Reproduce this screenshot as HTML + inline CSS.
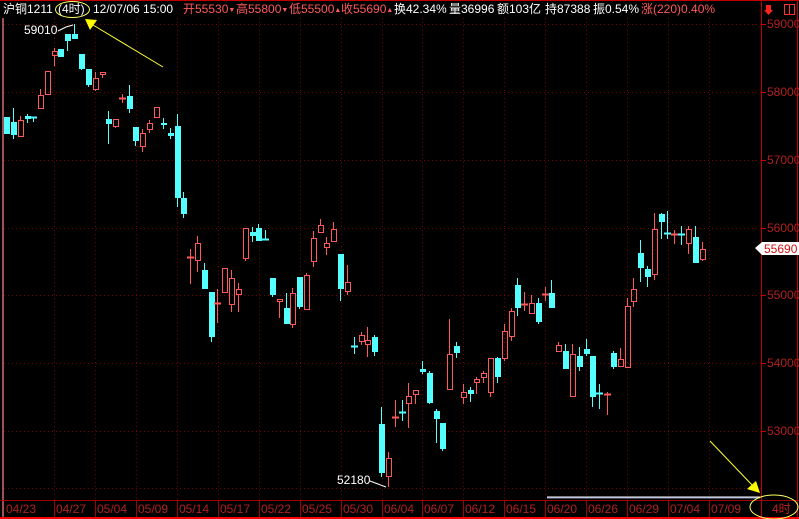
<!DOCTYPE html>
<html><head><meta charset="utf-8"><style>
html,body{margin:0;padding:0;background:#000;}
#w{position:relative;width:799px;height:519px;overflow:hidden;background:#000;font-family:"Liberation Sans","Noto Sans CJK SC",sans-serif;font-size:12px;}
.t{position:absolute;top:2px;white-space:nowrap;color:#fff;line-height:14px;}
.r{color:#ff5a5a;}
.tri{font-size:7px;vertical-align:1px;}
.ax{position:absolute;left:767px;color:#b02020;font-size:12px;line-height:12px;}
.dl{position:absolute;top:503px;color:#b02020;font-size:12px;line-height:13px;}
</style></head><body><div id="w">
<svg id="s" width="799" height="519" style="position:absolute;left:0;top:0">
<g id="grid" stroke="#7a0000" stroke-width="1" stroke-dasharray="1,3"></g>
<line x1="0" y1="0.5" x2="799" y2="0.5" stroke="#c00000"/>
<line x1="3" y1="18" x2="3" y2="519" stroke="#a05050" stroke-width="2"/>
<line x1="761.5" y1="0" x2="761.5" y2="519" stroke="#c00000"/>
<line x1="797.5" y1="0" x2="797.5" y2="519" stroke="#c00000"/>
<line x1="0" y1="500.5" x2="799" y2="500.5" stroke="#a00000"/>
<line x1="0" y1="518" x2="799" y2="518" stroke="#ff0000" stroke-width="2"/>
<g id="ticks" stroke="#c00000"></g>
<g id="c"></g>
<line x1="547" y1="497" x2="760" y2="497" stroke="#ffffff"/>
<line x1="547" y1="498" x2="760" y2="498" stroke="#8090c0"/>
<polyline points="58,31 66,27 73,25" fill="none" stroke="#fff"/>
<polyline points="370,481 378,484 386,487" fill="none" stroke="#fff"/>
<line x1="163" y1="67" x2="93" y2="25" stroke="#ffff30"/>
<polygon points="85,19 97,20 90,30" fill="#ffff00"/>
<line x1="710" y1="441" x2="753" y2="486" stroke="#ffff30"/>
<polygon points="760,493 747,489 756,481" fill="#ffff00"/>
<ellipse cx="72.5" cy="9.5" rx="17" ry="8" fill="none" stroke="#ffff60"/>
<ellipse cx="774" cy="507" rx="24" ry="12" fill="none" stroke="#ffff60"/>
<polygon points="755,248 762,242 799,242 799,255 762,255" fill="#fff"/>
<rect x="766" y="5" width="5" height="5" fill="#ff2020"/><polygon points="764,10 773,10 768.5,15" fill="#ff2020"/>
<rect x="784.5" y="4.5" width="10" height="10" fill="none" stroke="#ff3030"/><line x1="789.5" y1="5" x2="789.5" y2="14" stroke="#ff3030"/>
</svg>
<div class="t" style="left:3px">沪铜1211</div>
<div class="t" style="left:58px">(4时)</div>
<div class="t" style="left:93px">12/07/06 15:00</div>
<div class="t r" style="left:183px">开55530<span class="tri">▼</span></div>
<div class="t r" style="left:236px">高55800<span class="tri">▼</span></div>
<div class="t r" style="left:289px">低55500<span class="tri">▲</span></div>
<div class="t r" style="left:341px">收55690<span class="tri">▲</span></div>
<div class="t" style="left:394px">换42.34%</div>
<div class="t" style="left:449px">量36996</div>
<div class="t" style="left:497px">额103亿</div>
<div class="t" style="left:545px">持87388</div>
<div class="t" style="left:593px">振0.54%</div>
<div class="t r" style="left:641px">涨(220)0.40%</div>
<div class="t" style="left:24px;top:23px">59010</div>
<div class="t" style="left:337px;top:473px">52180</div>
<div class="ax" style="top:18px">59000</div>
<div class="ax" style="top:86px">58000</div>
<div class="ax" style="top:154px">57000</div>
<div class="ax" style="top:222px">56000</div>
<div class="ax" style="top:289px">55000</div>
<div class="ax" style="top:357px">54000</div>
<div class="ax" style="top:425px">53000</div>
<div class="ax" style="top:243px;left:764px;color:#d01010">55690</div>
<div class="dl" style="left:772px;color:#c02020">4时</div>
<div id="dates"></div>
</div>
<script>
var NS="http://www.w3.org/2000/svg";
function el(p,n,a){var e=document.createElementNS(NS,n);for(var k in a)e.setAttribute(k,a[k]);p.appendChild(e);return e;}
var g=document.getElementById('grid');
[24,92,160,228,295,363,431,488].forEach(function(y){el(g,'line',{x1:4,y1:y+.5,x2:761,y2:y+.5});});
var d=["04/23","04/27","05/04","05/09","05/14","05/17","05/22","05/25","05/30","06/04","06/07","06/12","06/15","06/20","06/26","06/29","07/04","07/09"];
var dh="";
for(var k=0;k<17;k++){var x=Math.round(54+40.94*k)+.5;el(g,'line',{x1:x,y1:18,x2:x,y2:500});
 el(document.getElementById('s'),'line',{x1:x,y1:501,x2:x,y2:517,stroke:'#a00000'});}
d.forEach(function(s,i){var x=i==0?6:Math.round(54+40.94*(i-1))+2;dh+='<div class="dl" style="left:'+x+'px">'+s+'</div>';});
document.getElementById('dates').innerHTML=dh;
var t=document.getElementById('ticks');
[24,92,160,228,295,363,431].forEach(function(y){el(t,'line',{x1:761,y1:y+.5,x2:766,y2:y+.5});});
var C=[[6,117,134,117,134,'c'],[13,122,135,108,139,'c'],[20,120,136,116,136,'r'],[27,116,119,114,123,'c'],[33,117,117,117,121,'c'],
[40,95,108,89,108,'r'],[47,71,94,71,94,'r'],[54,51,55,48,66,'r'],[60,49,57,49,57,'c'],[67,34,41,34,51,'c'],[74,34,39,24,39,'c'],
[81,54,69,54,70,'c'],[88,69,85,69,87,'c'],[95,78,89,72,91,'r'],[102,72,74,72,78,'r'],[108,119,124,111,144,'c'],[115,119,126,119,128,'r'],
[122,98,98,94,102,'r'],[129,96,109,85,113,'c'],[135,127,141,127,146,'c'],[142,133,146,129,152,'r'],[149,123,129,120,133,'r'],[156,107,117,107,117,'r'],
[163,123,125,118,129,'c'],[170,133,136,128,139,'c'],[177,126,198,114,207,'c'],[183,198,214,192,218,'c'],[190,257,257,249,283,'r'],[197,243,260,236,272,'r'],
[204,270,289,263,289,'c'],[211,292,337,292,342,'c'],[217,303,303,289,322,'r'],[224,268,292,268,292,'r'],[231,278,304,270,312,'r'],[238,289,294,283,312,'r'],
[245,228,258,228,261,'r'],[252,232,236,227,242,'c'],[258,228,241,224,241,'c'],[265,239,239,230,239,'c'],[272,278,295,278,297,'c'],[279,299,301,299,318,'r'],
[286,308,324,293,324,'c'],[292,293,324,288,328,'r'],[299,277,307,277,309,'c'],[306,275,309,273,309,'r'],[313,238,261,231,267,'r'],[320,225,232,219,232,'r'],
[326,243,247,237,255,'r'],[333,229,241,222,241,'r'],[340,254,289,254,301,'c'],[347,282,291,265,295,'r'],[354,346,346,337,353,'c'],[361,335,341,332,345,'r'],
[367,340,344,327,357,'r'],[374,337,352,335,356,'c'],[381,424,473,407,477,'c'],[388,458,476,452,487,'r'],[395,417,417,400,426,'r'],[402,412,412,400,420,'c'],
[408,396,403,383,428,'r'],[415,390,394,390,404,'r'],[422,369,372,361,374,'c'],[429,373,403,371,404,'c'],[436,411,419,409,443,'c'],[442,423,449,423,451,'c'],
[449,354,389,319,389,'r'],[456,346,353,342,358,'c'],[463,392,397,384,404,'r'],[470,390,394,387,402,'c'],[476,379,382,377,394,'r'],[483,373,377,371,383,'r'],
[490,358,392,358,397,'r'],[497,358,377,357,383,'c'],[504,331,358,324,361,'r'],[511,311,336,308,341,'r'],[517,285,308,278,316,'c'],[524,304,304,292,310,'r'],
[531,303,313,295,313,'r'],[538,303,322,298,324,'c'],[545,294,294,287,300,'r'],[551,293,308,280,308,'c'],[558,345,351,342,351,'r'],[565,351,369,344,369,'c'],
[572,354,396,344,396,'r'],[579,356,367,347,371,'c'],[586,349,354,339,356,'c'],[592,356,397,356,407,'c'],[599,393,393,384,408,'c'],[607,394,394,392,414,'r'],
[613,353,367,351,369,'c'],[620,359,366,348,366,'r'],[627,306,367,298,368,'r'],[633,289,301,278,307,'r'],[640,253,268,240,282,'c'],[647,269,277,266,287,'c'],
[654,229,274,213,280,'r'],[661,214,222,213,239,'c'],[667,233,233,211,238,'c'],[674,234,234,230,243,'r'],[681,234,234,226,244,'c'],[688,229,243,226,254,'r'],
[695,237,263,226,263,'c'],[702,249,259,242,261,'r']];
var cg=document.getElementById('c');
C.forEach(function(a){var x=a[0],bt=a[1],bb=a[2],wt=a[3],wb=a[4],r=a[5]=='r';var col=r?'#ff5a5a':'#54ffff';
 var xc=x+.5;
 if(bb-bt<=1){el(cg,'line',{x1:xc,y1:wt,x2:xc,y2:wb+1,stroke:col});el(cg,'line',{x1:x-3,y1:bt+.5,x2:x+4,y2:bt+.5,stroke:col,'stroke-width':2});return;}
 if(r){if(wt<bt)el(cg,'line',{x1:xc,y1:wt,x2:xc,y2:bt,stroke:col});if(wb>bb)el(cg,'line',{x1:xc,y1:bb,x2:xc,y2:wb,stroke:col});
  el(cg,'rect',{x:x-2+.5,y:bt+.5,width:5,height:bb-bt,fill:'none',stroke:col});}
 else{el(cg,'line',{x1:xc,y1:wt,x2:xc,y2:wb,stroke:col});el(cg,'rect',{x:x-2,y:bt,width:6,height:bb-bt,fill:col});}
});
</script>
</body></html>
